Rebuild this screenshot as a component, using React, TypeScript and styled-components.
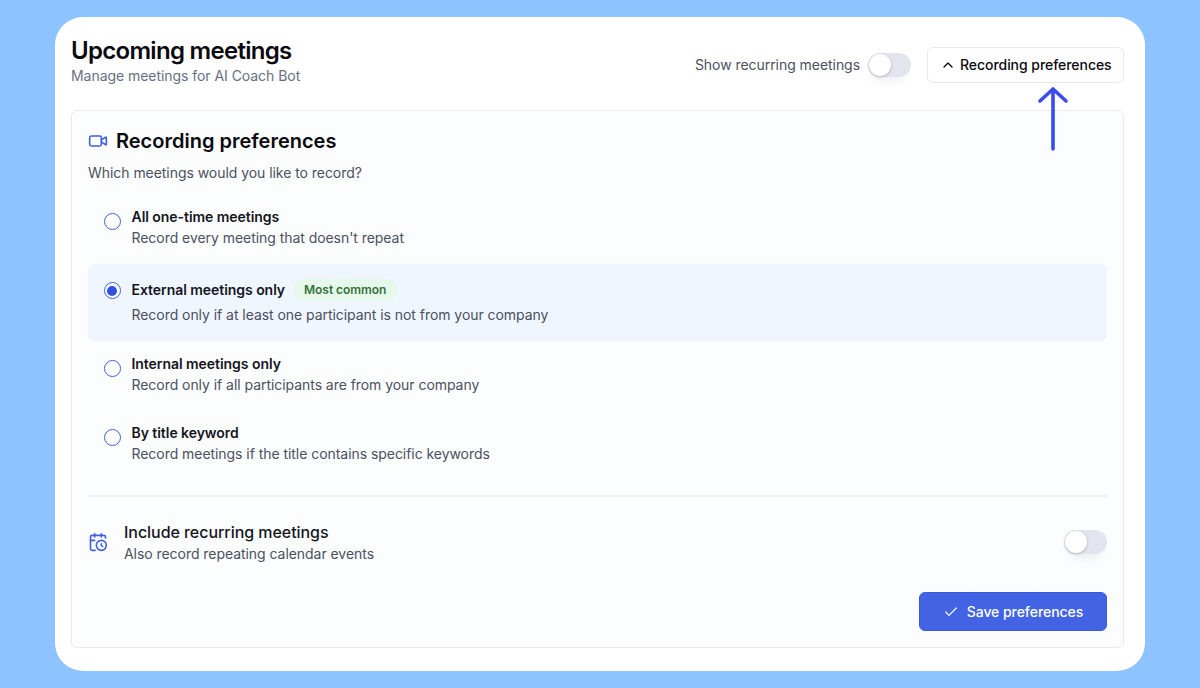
import React from "react";
import styled, { createGlobalStyle } from "styled-components";
import { CalendarClock, Check, ChevronUp, Video } from "lucide-react";

const Global = createGlobalStyle`
  html, body { margin: 0; padding: 0; height: 688px; overflow: hidden; }
  body { background: #8dc4ff; font-family: Inter, "Liberation Sans", sans-serif; letter-spacing: -0.05px; }
  * { box-sizing: border-box; }
`;

const Card = styled.main`
  position: relative;
  width: 1090px;
  height: 654px;
  margin: 17px 55px;
  padding: 0 21px 23px 16px;
  background: #fff;
  border-radius: 28px;
  display: flex;
  flex-direction: column;
`;
const Header = styled.header`
  height: 93px;
  display: flex;
  justify-content: space-between;
  align-items: flex-start;
`;
const Heading = styled.div`
  padding-top: 19px;
`;
const Title = styled.h1`
  margin: 0;
  font-size: 24px;
  line-height: 30px;
  font-weight: 600;
  letter-spacing: -0.7px;
  color: #0a0a0f;
`;
const Subtitle = styled.p`
  margin: 0;
  font-size: 14px;
  line-height: 20px;
  color: #667085;
`;
const Actions = styled.div`
  display: flex;
  align-items: center;
  padding-top: 30px;
`;
const ToggleLabel = styled.span`
  font-size: 14px;
  line-height: 20px;
  color: #4b5060;
  margin-right: 8px;
`;
const Track = styled.span`
  width: 43px;
  height: 24px;
  padding: 1px;
  flex: none;
  display: block;
  border-radius: 12px;
  background: #e2e5ee;
  box-shadow: 0 8px 12px -6px rgba(30, 40, 80, 0.1);
`;
const Knob = styled.span`
  display: block;
  width: 22px;
  height: 22px;
  border-radius: 50%;
  background: #fff;
  box-shadow: 0 1px 3px rgba(20, 30, 60, 0.25);
`;
const PrefButton = styled.button`
  width: 197px;
  height: 36px;
  margin-left: 16px;
  padding: 0 0 0 12px;
  display: flex;
  align-items: center;
  gap: 4px;
  background: #fff;
  border: 1px solid #e7e9f1;
  border-radius: 6px;
  font: 500 14px/20px Inter, sans-serif;
  letter-spacing: -0.05px;
  color: #0a0a0f;
`;
const Arrow = styled.svg`
  position: absolute;
  left: 980px;
  top: 69px;
`;
const Panel = styled.section`
  flex: 1;
  padding: 0 16px;
  background: #fcfdff;
  border: 1px solid #e8eaee;
  border-radius: 6px;
  display: flex;
  flex-direction: column;
`;
const PanelHead = styled.div`
  height: 32px;
  margin-top: 14px;
  display: flex;
  align-items: center;
  gap: 8px;
  color: #3f5fe0;
`;
const PanelTitle = styled.h2`
  margin: 0;
  font-size: 20px;
  line-height: 28px;
  font-weight: 600;
  letter-spacing: 0;
  color: #0a0a0f;
`;
const Question = styled.p`
  margin: 6px 0 0;
  font-size: 14px;
  line-height: 20px;
  color: #4b5060;
`;
const Options = styled.div`
  margin-top: 11px;
  display: flex;
  flex-direction: column;
`;
const Option = styled.label<{ $selected?: boolean }>`
  display: flex;
  gap: 11px;
  padding: ${(p) => (p.$selected ? "15px 16px 14px 15.5px" : "13px 16px 15px 15.5px")};
  min-height: ${(p) => (p.$selected ? 77 : 69)}px;
  background: ${(p) => (p.$selected ? "#f0f6ff" : "transparent")};
  border-radius: 6px;
  &:first-child { min-height: 70px; }
`;
const Radio = styled.span<{ $selected?: boolean }>`
  flex: none;
  width: 17px;
  height: 17px;
  margin-top: ${(p) => (p.$selected ? 3 : 6)}px;
  border: 1.5px solid #3f5fe0;
  border-radius: 50%;
  display: flex;
  align-items: center;
  justify-content: center;
  background: #fff;
`;
const RadioDot = styled.span`
  width: 10px;
  height: 10px;
  border-radius: 50%;
  background: #2f52e0;
`;
const OptionBody = styled.div`
  display: flex;
  flex-direction: column;
`;
const OptionTitleRow = styled.div`
  display: flex;
  align-items: center;
  gap: 8px;
`;
const OptionTitle = styled.span`
  font-size: 14px;
  line-height: 20px;
  font-weight: 600;
  color: #14151c;
`;
const Badge = styled.span`
  height: 22px;
  padding: 0 11px;
  border-radius: 11px;
  background: #e6f8e9;
  color: #36703f;
  font-size: 12px;
  line-height: 22px;
  font-weight: 600;
`;
const OptionDesc = styled.span<{ $selected?: boolean }>`
  margin-top: ${(p) => (p.$selected ? 4 : 1)}px;
  font-size: 14px;
  line-height: 20px;
  color: #4b5060;
`;
const Divider = styled.hr`
  margin: 16px 0 0;
  border: 0;
  border-top: 2px solid #edf0f4;
  width: 100%;
`;
const Recurring = styled.div`
  margin-top: 25px;
  display: flex;
  align-items: center;
  gap: 16px;
  color: #3f5fe0;
`;
const RecurringIcon = styled(CalendarClock)`
  margin-top: -3px;
  flex: none;
`;
const RecurringBody = styled.div`
  flex: 1;
  display: flex;
  flex-direction: column;
  gap: 2px;
`;
const RecurringTitle = styled.span`
  font-size: 16px;
  line-height: 20px;
  font-weight: 500;
  color: #14151c;
`;
const RecurringDesc = styled.span`
  font-size: 14px;
  line-height: 20px;
  color: #4b5060;
`;
const RecurringSwitch = styled.div`
  margin-top: -2px;
`;
const Footer = styled.div`
  margin-top: 28px;
  display: flex;
  justify-content: flex-end;
`;
const SaveButton = styled.button`
  width: 188px;
  height: 39px;
  display: flex;
  align-items: center;
  justify-content: center;
  gap: 8px;
  border: 1px solid #3a59d8;
  border-radius: 6px;
  background: #4163e4;
  color: #fff;
  font: 500 14px/20px Inter, sans-serif;
  letter-spacing: -0.05px;
`;

const Toggle = () => (
  <Track>
    <Knob />
  </Track>
);

const items = [
  { title: "All one-time meetings", desc: "Record every meeting that doesn't repeat" },
  { title: "External meetings only", desc: "Record only if at least one participant is not from your company", selected: true, badge: "Most common" },
  { title: "Internal meetings only", desc: "Record only if all participants are from your company" },
  { title: "By title keyword", desc: "Record meetings if the title contains specific keywords" },
];

export default function App() {
  return (
    <>
      <Global />
      <Card>
        <Header>
          <Heading>
            <Title>Upcoming meetings</Title>
            <Subtitle>Manage meetings for AI Coach Bot</Subtitle>
          </Heading>
          <Actions>
            <ToggleLabel>Show recurring meetings</ToggleLabel>
            <Toggle />
            <PrefButton>
              <ChevronUp size={16} strokeWidth={2} />
              Recording preferences
            </PrefButton>
          </Actions>
        </Header>
        <Arrow width="36" height="66" viewBox="0 0 36 66" fill="none" stroke="#3a4cf0" strokeWidth="3.6" strokeLinecap="round" strokeLinejoin="round">
          <path d="M18 3V63M5 15L18 3L31 15" />
        </Arrow>
        <Panel>
          <PanelHead>
            <Video size={20} strokeWidth={1.9} />
            <PanelTitle>Recording preferences</PanelTitle>
          </PanelHead>
          <Question>Which meetings would you like to record?</Question>
          <Options>
            {items.map((o) => (
              <Option key={o.title} $selected={o.selected}>
                <Radio $selected={o.selected}>{o.selected && <RadioDot />}</Radio>
                <OptionBody>
                  <OptionTitleRow>
                    <OptionTitle>{o.title}</OptionTitle>
                    {o.badge && <Badge>{o.badge}</Badge>}
                  </OptionTitleRow>
                  <OptionDesc $selected={o.selected}>{o.desc}</OptionDesc>
                </OptionBody>
              </Option>
            ))}
          </Options>
          <Divider />
          <Recurring>
            <RecurringIcon size={20} strokeWidth={1.9} />
            <RecurringBody>
              <RecurringTitle>Include recurring meetings</RecurringTitle>
              <RecurringDesc>Also record repeating calendar events</RecurringDesc>
            </RecurringBody>
            <RecurringSwitch>
              <Toggle />
            </RecurringSwitch>
          </Recurring>
          <Footer>
            <SaveButton>
              <Check size={16} strokeWidth={1.75} />
              Save preferences
            </SaveButton>
          </Footer>
        </Panel>
      </Card>
    </>
  );
}
